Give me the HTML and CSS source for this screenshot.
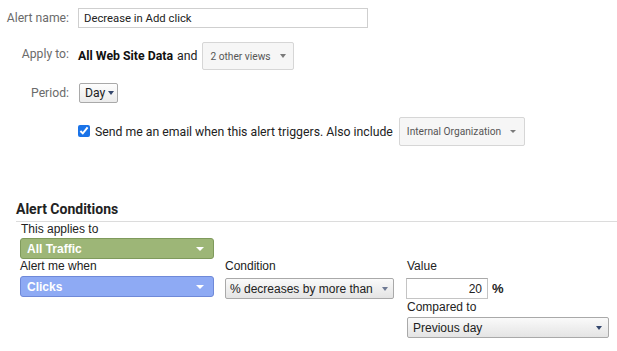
FILE: index.html
```html
<!DOCTYPE html>
<html>
<head>
<meta charset="utf-8">
<link rel="stylesheet" href="styles.css">
</head>
<body>
<div class="page">
  <div class="row row-name">
    <div class="lbl">Alert name:</div>
    <input class="name-input" type="text" value="Decrease in Add click">
  </div>
  <div class="row row-apply">
    <div class="lbl lbl-apply">Apply to:</div>
    <span class="strong">All Web Site Data</span><span class="and">and</span>
    <div class="menu-btn views-btn"><span>2 other views</span><span class="caret caret-gray"></span></div>
  </div>
  <div class="row row-period">
    <div class="lbl">Period:</div>
    <div class="day-btn"><span>Day</span><span class="caret caret-navy"></span></div>
  </div>
  <div class="row row-email">
    <div class="lbl"></div>
    <input class="check" type="checkbox" checked>
    <span class="email-text">Send me an email when this alert triggers. Also include</span>
    <div class="menu-btn org-btn"><span>Internal Organization</span><span class="caret caret-gray small"></span></div>
  </div>

  <div class="conditions">
    <div class="cond-head">Alert Conditions</div>
    <div class="cond-body">
      <div class="c-lbl first">This applies to</div>
      <div class="pill pill-green"><span>All Traffic</span><span class="caret caret-white"></span></div>
      <div class="cond-row">
        <div class="col col-metric">
          <div class="c-lbl">Alert me when</div>
          <div class="pill pill-blue"><span>Clicks</span><span class="caret caret-white"></span></div>
        </div>
        <div class="col col-cond">
          <div class="c-lbl gap4">Condition</div>
          <div class="sel sel-cond"><span>% decreases by more than</span><span class="caret caret-slate"></span></div>
        </div>
        <div class="col col-value">
          <div class="c-lbl gap4 indent">Value</div>
          <div class="value-line">
            <input class="value-input" type="text" value="20">
            <span class="pct">%</span>
          </div>
          <div class="c-lbl indent">Compared to</div>
          <div class="sel sel-prev"><span>Previous day</span><span class="caret caret-navy"></span></div>
        </div>
      </div>
    </div>
  </div>
</div>
</body>
</html>
```
FILE: styles.css
```css
* { box-sizing: border-box; }
body {
  margin: 0;
  background: #fff;
  font-family: Roboto, "Liberation Sans", sans-serif;
  color: #222;
}
.page { padding-top: 8px; }
.row { display: flex; align-items: center; }
.lbl {
  width: 69px;
  flex: none;
  margin-right: 9px;
  text-align: right;
  color: #6b6b6b;
  font-size: 12.2px;
}
.row-name { height: 20px; }
.name-input {
  width: 290px;
  height: 20px;
  margin: 0;
  border: 1px solid #cfcfcf;
  padding: 0 5px;
  font-family: Roboto, sans-serif;
  font-size: 11.3px;
  color: #222;
  outline: none;
}
.row-apply { margin-top: 14px; height: 28px; }
.lbl-apply { position: relative; top: -2px; }
.strong { font-weight: 700; font-size: 12.3px; color: #111; }
.and { margin-left: 4px; font-size: 12.3px; }
.menu-btn {
  display: flex;
  align-items: center;
  justify-content: space-between;
  border: 1px solid #d6d6d6;
  border-radius: 2px;
  background: #f6f6f6;
  font-size: 10.2px;
  color: #555;
}
.views-btn { margin-left: 5px; width: 92px; height: 28px; padding: 0 7px 0 7px; }
.caret {
  display: inline-block;
  width: 0;
  height: 0;
  border-left: 3.5px solid transparent;
  border-right: 3.5px solid transparent;
  border-top: 4px solid #777;
}
.caret-gray { border-top-color: #7a7a7a; }
.caret.small { border-left-width: 3px; border-right-width: 3px; border-top-width: 3px; }
.caret-navy { border-top-color: #34476d; }
.caret-white { border-left-width: 4px; border-right-width: 4px; border-top: 4px solid #fff; }
.caret-slate { border-left-width: 3px; border-right-width: 3px; border-top: 4px solid #6f7a94; }
.row-period { margin-top: 13px; height: 20px; }
.day-btn {
  margin-left: 1px;
  width: 39px;
  height: 20px;
  display: flex;
  align-items: center;
  gap: 3px;
  padding-left: 5px;
  border: 1px solid #a9a9a9;
  border-radius: 2px;
  background: linear-gradient(#fdfdfd, #ebebeb);
  font-size: 12.2px;
  color: #222;
}
.row-email { margin-top: 14px; height: 29px; }
.check {
  margin: 0;
  width: 12px;
  height: 12px;
  accent-color: #1a73e8;
  position: relative;
  top: -1px;
}
.email-text { margin-left: 5px; font-size: 12.25px; color: #222; }
.org-btn { margin-left: 6px; width: 126px; height: 29px; padding: 0 8px 0 7px; }

.conditions { margin-top: 54px; margin-left: 16px; }
.cond-head {
  height: 22px;
  line-height: 18px;
  padding-bottom: 3px;
  border-bottom: 1px solid #dcdcdc;
  font-weight: 700;
  font-size: 14px;
  color: #222;
}
.cond-body { padding-left: 4px; font-family: "Liberation Sans", Arial, sans-serif; }
.c-lbl { font-size: 12px; line-height: 15px; color: #222; margin-bottom: 2px; }
.c-lbl.first { margin-bottom: 1px; padding-left: 1px; }
.c-lbl.gap4 { margin-bottom: 4px; }
.c-lbl.indent { padding-left: 1px; }
.pill {
  width: 194px;
  height: 21px;
  display: flex;
  align-items: center;
  justify-content: space-between;
  padding: 0 9px 0 6px;
  border-radius: 3px;
  color: #fff;
  font-weight: 700;
  font-size: 12px;
}
.pill-green { background: #9db677; border: 1px solid #7f9a5c; }
.pill-blue { background: #8eaaf4; border: 1px solid #6f89d8; }
.cond-row { display: flex; align-items: flex-start; }
.col-cond { margin-left: 11px; }
.col-value { margin-left: 12px; }
.sel {
  height: 21px;
  display: flex;
  align-items: center;
  justify-content: space-between;
  border: 1px solid #a9a9a9;
  border-radius: 2px;
  background: linear-gradient(#fafafa, #e4e4e4);
  font-size: 12px;
  color: #222;
}
.sel-cond { width: 169px; padding: 0 5px 0 4px; }
.sel-prev { width: 202px; margin-left: 1px; padding: 0 6px 0 5px; }
.value-line { display: flex; align-items: center; height: 21px; margin-bottom: 1px; }
.value-input {
  width: 82px;
  height: 21px;
  margin: 0;
  border: 1px solid #c4c4c4;
  border-top-color: #a9a9a9;
  padding: 0 5px;
  text-align: right;
  font-family: "Liberation Sans", Arial, sans-serif;
  font-size: 12px;
  color: #222;
  outline: none;
}
.pct { margin-left: 4px; font-weight: 700; font-size: 13px; }
```
